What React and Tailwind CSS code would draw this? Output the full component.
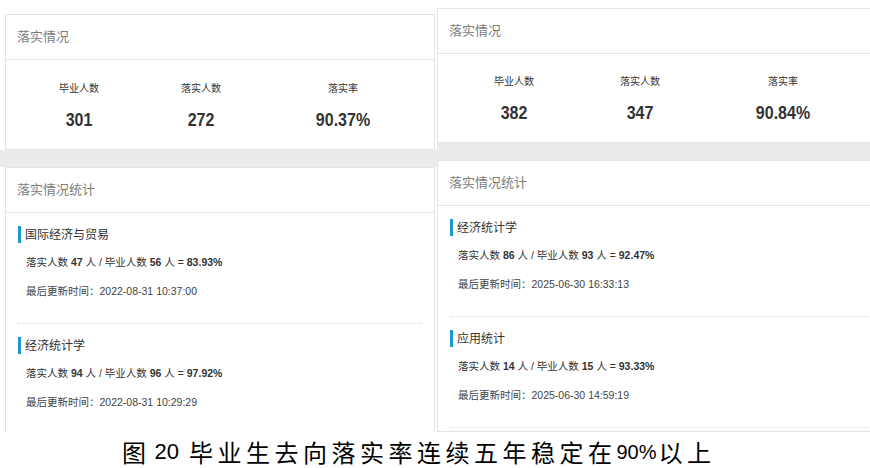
const sans = "font-['Liberation_Sans','Noto_Sans_CJK_SC',sans-serif]";

const leftData = {
  stats: [
    { label: "毕业人数", value: "301" },
    { label: "落实人数", value: "272" },
    { label: "落实率", value: "90.37%" },
  ],
  items: [
    { title: "国际经济与贸易", a: 47, b: 56, rate: "83.93%", time: "2022-08-31 10:37:00" },
    { title: "经济统计学", a: 94, b: 96, rate: "97.92%", time: "2022-08-31 10:29:29" },
  ],
};

const rightData = {
  stats: [
    { label: "毕业人数", value: "382" },
    { label: "落实人数", value: "347" },
    { label: "落实率", value: "90.84%" },
  ],
  items: [
    { title: "经济统计学", a: 86, b: 93, rate: "92.47%", time: "2025-06-30 16:33:13" },
    { title: "应用统计", a: 14, b: 15, rate: "93.33%", time: "2025-06-30 14:59:19" },
  ],
};

const CardHeader = ({ children }) => (
  <div className="h-[45px] border-b border-[#e6e6e6] flex items-center pl-[11px] text-[13px] text-[#7d7d7d]">
    {children}
  </div>
);

const StatCell = ({ label, value, width }) => (
  <div className={`flex flex-col items-center ${width}`}>
    <div className="text-[10px] leading-[16px] text-[#333]">{label}</div>
    <div className="mt-[12px] text-[16px] leading-[22px] font-bold text-[#333] scale-y-[1.2]">{value}</div>
  </div>
);

const Item = ({ item }) => (
  <div className="mx-3 pt-[13px] pb-[24px] border-b border-dotted border-[#d9d9d9]">
    <div className="h-[17px] border-l-[3px] border-[#1b9ad4] pl-[4px] flex items-center text-[12px] text-[#333]">
      {item.title}
    </div>
    <div className="mt-[11px] pl-[8px] text-[10.5px] leading-[16px] text-[#333]">
      落实人数 <b>{item.a}</b> 人 / 毕业人数 <b>{item.b}</b> 人 = <b>{item.rate}</b>
    </div>
    <div className="mt-[13px] pl-[8px] text-[10.5px] leading-[16px] text-[#444]">
      最后更新时间：{item.time}
    </div>
  </div>
);

const Screen = ({ data, wide }) => (
  <div className={`h-[432px] overflow-hidden flex flex-col ${wide ? "w-[433px] pt-[8px]" : "w-[437px] pt-[14px]"}`}>
    <div className={`bg-white border border-[#e3e3e3] shrink-0 ${wide ? "w-[450px] border-r-0" : "ml-[5px] w-[430px]"}`}>
      <CardHeader>落实情况</CardHeader>
      <div className={`flex pb-[18px] ${wide ? "pl-[13px] pt-[20px]" : "pl-[12px] pt-[21px]"}`}>
        <StatCell {...data.stats[0]} width={wide ? "w-[126px]" : "w-[122px]"} />
        <StatCell {...data.stats[1]} width={wide ? "w-[126px]" : "w-[122px]"} />
        <StatCell {...data.stats[2]} width={wide ? "w-[160px]" : "w-[162px]"} />
      </div>
    </div>
    <div className="h-[17px] shrink-0 bg-[#ebebeb]" />
    <div className={`flex-1 bg-white border border-[#e3e3e3] ${wide ? "w-[450px] border-r-0" : "ml-[5px] w-[430px]"}`}>
      <CardHeader>落实情况统计</CardHeader>
      {data.items.map((it) => (
        <Item key={it.title} item={it} />
      ))}
    </div>
  </div>
);

export default function App() {
  return (
    <div className={`w-[870px] h-[468px] bg-white overflow-hidden ${sans}`}>
      <div className="flex">
        <Screen data={leftData} />
        <Screen data={rightData} wide />
      </div>
      <div className="mt-[5px] pl-[122px] flex items-center h-[30px] leading-[30px] text-[24px] tracking-[4.5px] text-black font-['Noto_Sans_CJK_SC',sans-serif] whitespace-nowrap">
        <span>图</span>
        <span className="font-['Liberation_Sans',sans-serif] text-[22px] tracking-normal ml-[4px] mr-[10px]">20</span>
        <span>毕业生去向落实率连续五年稳定在</span>
        <span className="font-['Liberation_Sans',sans-serif] text-[20px] tracking-normal mr-[2px]">90%</span>
        <span>以上</span>
      </div>
    </div>
  );
}
